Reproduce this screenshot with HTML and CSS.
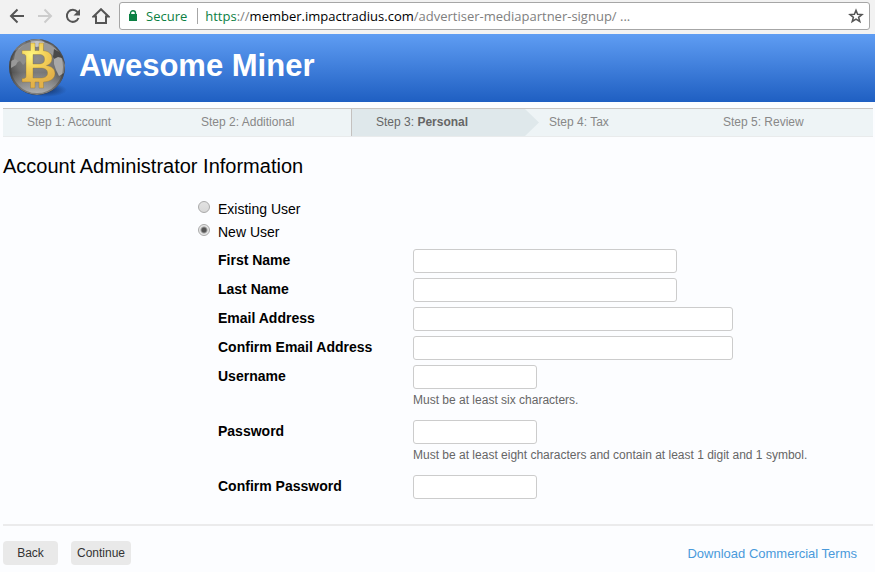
FILE: index.html
```html
<!DOCTYPE html>
<html lang="en">
<head>
  <meta charset="utf-8">
  <meta name="viewport" content="width=device-width, initial-scale=1">
  <title>Awesome Miner</title>
  <link rel="stylesheet" href="styles.css">
</head>
<body>
  <!-- Browser bar -->
  <div class="toolbar">
    <button type="button" class="nav-button" aria-label="Back">
      <svg width="16" height="16" viewBox="0 0 16 16"><path d="M15 8H2M8.500 1.500L2 8l6.500 6.500"/></svg>
    </button>
    <button type="button" class="nav-button" aria-label="Forward" disabled>
      <svg width="16" height="16" viewBox="0 0 16 16"><path d="M1 8h13M7.500 1.500L14 8l-6.500 6.500"/></svg>
    </button>
    <button type="button" class="nav-button" aria-label="Reload">
      <svg width="16" height="16" viewBox="0 0 16 16"><path d="M13.500 10A6 6 0 1 1 12.500 4"/><path class="fill" d="M15 1v6.500H8.500z"/></svg>
    </button>
    <button type="button" class="nav-button" aria-label="Home">
      <svg width="18" height="16" viewBox="0 0 18 16"><path d="M1.500 8.500L9 1.200l7.500 7.300H14V15H4V8.500z"/></svg>
    </button>
    <div class="address">
      <svg class="lock" width="10" height="12" viewBox="0 0 10 12"><rect x="1" y="4" width="8" height="7" fill="#0b8043"/><path d="M2.500 5V3.200a2.500 2.500 0 0 1 5 0V5" fill="none" stroke="#0b8043" stroke-width="1.400"/></svg>
      <span class="secure">Secure</span>
      <span class="url"><span class="scheme">https</span>://<span class="host">member.impactradius.com</span>/advertiser-mediapartner-signup/ ...</span>
      <button type="button" class="star" aria-label="Bookmark">
        <svg width="16" height="16" viewBox="0 0 16 16"><path d="M8 2.200l1.600 4 4.400.3-3.400 2.800 1.200 4.200L8 11.200l-3.800 2.300 1.200-4.200L2 6.500l4.400-.3z"/></svg>
      </button>
    </div>
  </div>

  <header class="banner">
    <svg class="logo" width="60" height="62" viewBox="0 0 60 62">
      <defs>
        <radialGradient id="globe" cx="50%" cy="35%" r="62%">
          <stop offset="0" stop-color="#8e8e8e"/>
          <stop offset="0.6" stop-color="#707070"/>
          <stop offset="1" stop-color="#3c3c3c"/>
        </radialGradient>
        <radialGradient id="gold" gradientUnits="userSpaceOnUse" cx="24" cy="18" r="28">
          <stop offset="0" stop-color="#fff77e"/>
          <stop offset="0.5" stop-color="#f2cf58"/>
          <stop offset="1" stop-color="#e3b24a"/>
        </radialGradient>
        <radialGradient id="shade">
          <stop offset="0" stop-color="#10264e" stop-opacity="0.8"/>
          <stop offset="1" stop-color="#10264e" stop-opacity="0"/>
        </radialGradient>
        <linearGradient id="gloss" x1="0" y1="0" x2="0" y2="1">
          <stop offset="0.6" stop-color="#fff" stop-opacity="0"/>
          <stop offset="1" stop-color="#eee" stop-opacity="0.7"/>
        </linearGradient>
        <clipPath id="disc"><circle cx="29" cy="30" r="28"/></clipPath>
      </defs>
      <ellipse cx="37" cy="53" rx="22" ry="7" fill="url(#shade)"/>
      <circle cx="29" cy="30" r="28" fill="url(#globe)"/>
      <g clip-path="url(#disc)">
        <path d="M6 22l2-9 7-7 9-4 4 5-3 8-4 3-3 7-3 3-3-4-4 2z" fill="#8d8d8d"/>
        <path d="M22 3l9-1 6 3-2 4-7 1-4-2z" fill="#c6c6c6"/>
        <path d="M36 5l9 3 6 7-4 5-5-4-5 1-2-8z" fill="#999"/>
        <path d="M46 12l5 3 4 7-4-1-2 4-4-5z" fill="#4a4a4a"/>
        <path d="M46 22l4-2 4 1 3 7-1 8-5 3-3-6-2-6z" fill="#a8a8a8"/>
        <path d="M3 24l4-2 3 2-2 4-5 3z" fill="#999"/>
        <path d="M8 8l8-5 2 3-7 6-5 2z" fill="#a5a5a5"/>
        <circle cx="29" cy="30" r="28" fill="url(#gloss)"/>
      </g>
      <circle cx="29" cy="30" r="27" fill="none" stroke="#333" stroke-opacity="0.4" stroke-width="2"/>
      <!-- Gold coin sign with a thin dark edge -->
      <path d="M14 13.500H22.500V6H27V13.500H31V6H35.500V13.700C41 14.300 44 17 44 21.500C44 25 42 27.500 38.500 28.500C44 29.500 47 32 47 36.500C47 41.500 42.500 44.500 35.500 45V51H31V45H27V51H22.500V45H14V41.500C17 41.500 18 41 18 39V20C18 18 17 17 14 17ZM25 17.500V27H30.500C35 27 36.500 25.500 36.500 22.300S35 17.500 31 17.500ZM25 31V41H32C37 41 39.500 39.500 39.500 36S37 31 32 31Z" fill="url(#gold)" fill-rule="evenodd" stroke="#8d7430" stroke-opacity="0.600" stroke-width="0.600"/>
    </svg>
    <div class="brand">Awesome Miner</div>
  </header>

  <main>
    <ol class="steps">
      <li>Step 1: Account</li>
      <li>Step 2: Additional</li>
      <li class="current" aria-current="step">Step 3: <b>Personal</b></li>
      <li>Step 4: Tax</li>
      <li>Step 5: Review</li>
    </ol>

    <h1>Account Administrator Information</h1>

    <form>
      <div class="user-type">
        <div class="option">
          <input id="existing_user" name="user_type" type="radio">
          <label for="existing_user">Existing User</label>
        </div>
        <div class="option">
          <input id="new_user" name="user_type" type="radio" checked>
          <label for="new_user">New User</label>
        </div>
      </div>

      <div class="fields">
        <div class="form-group">
          <label for="first_name">First Name</label>
          <div><input class="medium" id="first_name" name="first_name" type="text"></div>
        </div>
        <div class="form-group">
          <label for="last_name">Last Name</label>
          <div><input class="medium" id="last_name" name="last_name" type="text"></div>
        </div>
        <div class="form-group">
          <label for="email">Email Address</label>
          <div><input class="long" id="email" name="email" type="email"></div>
        </div>
        <div class="form-group">
          <label for="confirm_email">Confirm Email Address</label>
          <div><input class="long" id="confirm_email" name="confirm_email" type="email"></div>
        </div>
        <div class="form-group">
          <label for="username">Username</label>
          <div>
            <input class="short" id="username" name="username" type="text">
            <p class="hint">Must be at least six characters.</p>
          </div>
        </div>
        <div class="form-group">
          <label for="password">Password</label>
          <div>
            <input class="short" id="password" name="password" type="password">
            <p class="hint">Must be at least eight characters and contain at least 1 digit and 1 symbol.</p>
          </div>
        </div>
        <div class="form-group">
          <label for="confirm_password">Confirm Password</label>
          <div><input class="short" id="confirm_password" name="confirm_password" type="password"></div>
        </div>
      </div>

      <div class="actions">
        <button type="button" class="back">Back</button>
        <button type="submit">Continue</button>
        <a href="#">Download Commercial Terms</a>
      </div>
    </form>
  </main>
</body>
</html>
```
FILE: styles.css
```css
* {
  box-sizing: border-box;
}
body {
  margin: 0;
  background: #fcfdff;
  color: #000;
  font-family: "Liberation Sans", Arial, sans-serif;
  font-size: 14px;
  line-height: 16px;
}
button {
  border: none;
  font-family: inherit;
  cursor: pointer;
}

/* Browser bar */
.toolbar {
  display: flex;
  align-items: center;
  height: 34px;
  padding: 0 5px 2px 3px;
  background: #f2f2f2;
}
.nav-button {
  display: flex;
  justify-content: center;
  flex: none;
  width: 28px;
  padding: 0;
  background: none;
}
.nav-button path,
.star path {
  fill: none;
  stroke: #555;
  stroke-width: 2;
}
.nav-button .fill {
  fill: #555;
  stroke: none;
}
.nav-button:disabled path {
  stroke: #ccc;
}
.address {
  display: flex;
  align-items: center;
  flex: 1;
  min-width: 0;
  height: 28px;
  margin-left: 4px;
  padding: 0 5px 0 8px;
  border: 1px solid #a6a6a6;
  border-radius: 3px;
  background: #fff;
  color: #808080;
  font-family: "Open Sans", "Noto Sans", sans-serif;
  font-size: 13px;
  white-space: nowrap;
}
.secure {
  margin-left: 8px;
  padding-right: 10px;
  border-right: 1px solid #a6a6a6;
  color: #0b8043;
}
.url {
  flex: 1;
  margin-left: 7px;
  overflow: hidden;
}
.scheme {
  color: #0b8043;
}
.host {
  color: #000;
}
.star {
  display: flex;
  padding: 0;
  background: none;
}
.star path {
  stroke-width: 1.5;
}

.banner {
  display: flex;
  align-items: center;
  height: 68px;
  padding-left: 8px;
  background: linear-gradient(#5f9df3, #1f5fc2);
}
.brand {
  margin: 0 0 4px 11px;
  color: #fff;
  font-size: 31px;
  font-weight: bold;
  line-height: 36px;
}

main {
  padding: 6px 2px 0 3px;
}

/* Progress through the signup */
.steps {
  display: grid;
  grid-template-columns: repeat(5, 1fr);
  margin: 0;
  padding: 0;
  border-top: 1px solid #c8c4c2;
  border-bottom: 1px solid #e9ebec;
  background: #eef4f6;
  color: #888;
  font-size: 12px;
  line-height: 27px;
  list-style: none;
}
.steps li {
  padding-left: 24px;
}
.steps .current {
  position: relative;
  border-left: 1px solid #c4c1bf;
  background: #dfe8eb;
  color: #666;
}
.steps .current::after {
  content: "";
  position: absolute;
  top: 0;
  left: 100%;
  width: 14px;
  height: 100%;
  background: #dfe8eb;
  clip-path: polygon(0 0, 100% 50%, 0 100%);
}

h1 {
  margin: 17px 0 0;
  font-size: 20px;
  font-weight: normal;
  line-height: 24px;
}

.user-type {
  padding: 20px 0 0 195px;
}
.option {
  display: flex;
  align-items: flex-start;
  height: 23px;
}
.option label {
  padding: 3px 0 0 8px;
}
.option input {
  appearance: none;
  width: 12px;
  height: 12px;
  margin: 3px 0 0;
  border: 1px solid #aaa;
  border-radius: 50%;
  background: linear-gradient(#e2e2e2, #d8d8d8);
}
.option input:checked {
  background: radial-gradient(circle, #555 0 2px, #e6e6e6 4px);
}

.fields {
  padding: 5px 0 0 215px;
}
.form-group {
  display: grid;
  grid-template-columns: 195px 1fr;
  margin-bottom: 5px;
}
.form-group label {
  padding-top: 3px;
  font-weight: bold;
}
.form-group input {
  display: block;
  height: 24px;
  padding: 2px 5px;
  border: 1px solid #ccc;
  border-radius: 3px;
  background: #fff;
}
.short {
  width: 124px;
}
.medium {
  width: 264px;
}
.long {
  width: 320px;
}
.hint {
  margin: 3px 0 7px;
  color: #666;
  font-size: 12px;
  line-height: 16px;
}

.actions {
  display: flex;
  align-items: center;
  margin-top: 25px;
  padding: 15px 16px 0 0;
  border-top: 2px solid #ebebec;
}
.actions button {
  width: 60px;
  height: 24px;
  padding: 0;
  border-radius: 4px;
  background: #e9e9e9;
  color: #333;
  font-size: 12px;
}
.actions .back {
  width: 55px;
  margin-right: 13px;
}
.actions a {
  margin-left: auto;
  padding-top: 2px;
  color: #4a9adb;
  font-size: 13px;
  text-decoration: none;
}
```
